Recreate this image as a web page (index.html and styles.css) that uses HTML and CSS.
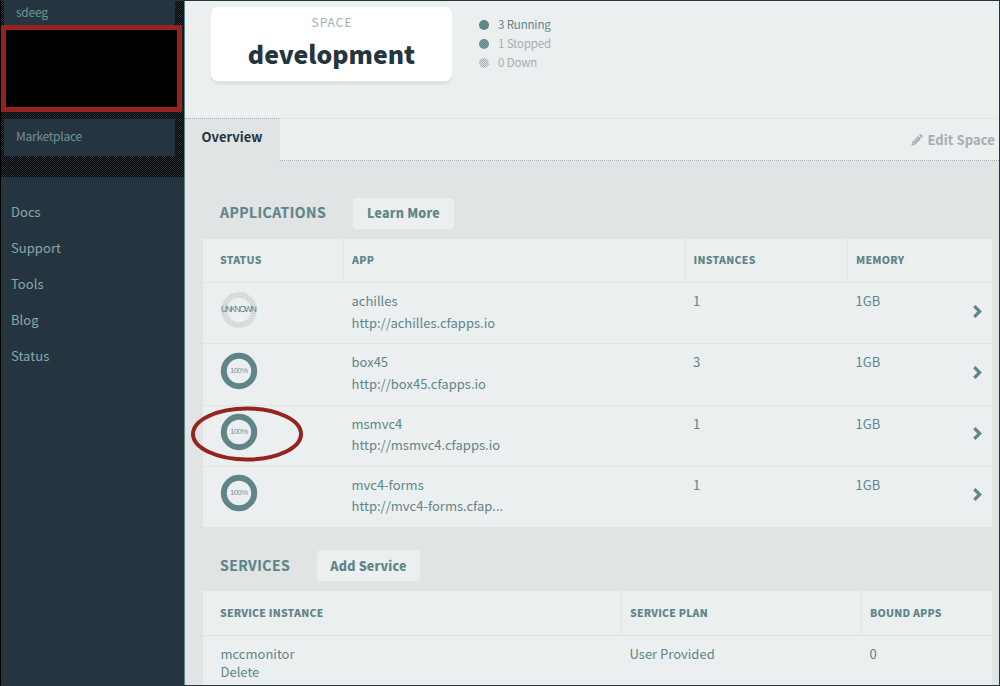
FILE: index.html
```html
<!DOCTYPE html>
<html lang="en">
<head>
<meta charset="utf-8">
<title>development</title>
<link rel="stylesheet" href="styles.css">
</head>
<body>
<div class="app">
  <aside class="sidebar">
    <div class="account">
      <div class="account-item account-user"><span class="t-user">sdeeg</span></div>
      <div class="redacted"></div>
      <div class="account-item account-market"><span class="t-market">Marketplace</span></div>
    </div>
    <nav class="links">
      <a>Docs</a><a>Support</a><a>Tools</a><a>Blog</a><a>Status</a>
    </nav>
  </aside>
  <main class="main">
    <header class="header">
      <div class="space-card">
        <div class="space-label"><span>SPACE</span></div>
        <div class="space-name"><span>development</span></div>
      </div>
      <ul class="states">
        <li class="running"><i class="dot"></i><span>3 Running</span></li>
        <li class="stopped"><i class="dot"></i><span>1 Stopped</span></li>
        <li class="down"><i class="dot"></i><span>0 Down</span></li>
      </ul>
    </header>
    <div class="tabs">
      <div class="tab"><span>Overview</span></div>
      <div class="tab-rest">
        <svg class="pencil" viewBox="0 0 12 12"><path d="M0.3 11.7L1.2 8L7.2 2L10 4.8L4 10.8ZM8 1.3L9 .4Q9.6 0 10.2 .5L11.5 1.8Q12 2.4 11.5 3L10.7 3.9Z"/><path class="cut" d="M3.2 8.2L7.2 4.2M1.7 8.8L3.2 10.3"/></svg>
        <span class="edit">Edit Space</span>
      </div>
    </div>
    <section class="section">
      <div class="title apps-title"><h2><span>APPLICATIONS</span></h2><button class="learn"><span>Learn More</span></button></div>
      <div class="table apps">
        <div class="head"><b><span>STATUS</span></b><b><span>APP</span></b><b><span>INSTANCES</span></b><b><span>MEMORY</span></b></div>
        <div class="row">
          <div class="status"><svg class="ring" viewBox="0 0 38 38"><circle class="unknown" cx="19" cy="19" r="15"/><circle class="specks" cx="19" cy="19" r="16.2"/><circle class="specks" cx="19" cy="19" r="13.8"/><text class="unk" x="19" y="21" textLength="36">UNKNOWN</text></svg></div>
          <div class="name"><span>achilles</span><br><span>http://achilles.cfapps.io</span></div><div>1</div><div>1GB</div><svg class="chev" viewBox="0 0 10 14"><path d="M2 2L7 7L2 12"/></svg>
        </div>
        <div class="row">
          <div class="status"><svg class="ring" viewBox="0 0 38 38"><circle cx="19" cy="19" r="15.2"/><text x="19" y="21" textLength="18">100%</text></svg></div>
          <div class="name"><span>box45</span><br><span>http://box45.cfapps.io</span></div><div>3</div><div>1GB</div><svg class="chev" viewBox="0 0 10 14"><path d="M2 2L7 7L2 12"/></svg>
        </div>
        <div class="row">
          <div class="status"><svg class="ring" viewBox="0 0 38 38"><circle cx="19" cy="19" r="15.2"/><text x="19" y="21" textLength="18">100%</text></svg><svg class="mark" viewBox="0 0 112 56"><ellipse cx="56" cy="28" rx="54" ry="25.5"/></svg></div>
          <div class="name"><span>msmvc4</span><br><span>http://msmvc4.cfapps.io</span></div><div>1</div><div>1GB</div><svg class="chev" viewBox="0 0 10 14"><path d="M2 2L7 7L2 12"/></svg>
        </div>
        <div class="row">
          <div class="status"><svg class="ring" viewBox="0 0 38 38"><circle cx="19" cy="19" r="15.2"/><text x="19" y="21" textLength="18">100%</text></svg></div>
          <div class="name"><span>mvc4-forms</span><br><span>http://mvc4-forms.cfap...</span></div><div>1</div><div>1GB</div><svg class="chev" viewBox="0 0 10 14"><path d="M2 2L7 7L2 12"/></svg>
        </div>
      </div>
      <div class="title services-title"><h2><span>SERVICES</span></h2><button class="add"><span>Add Service</span></button></div>
      <div class="table services">
        <div class="head"><b><span>SERVICE INSTANCE</span></b><b><span>SERVICE PLAN</span></b><b><span>BOUND APPS</span></b></div>
        <div class="row"><div class="first"><span>mccmonitor</span><br><span>Delete</span></div><div><span>User Provided</span></div><div>0</div></div>
      </div>
    </section>
  </main>
</div>
</body>
</html>
```
FILE: styles.css
```css
* { box-sizing: border-box; }
body {
  margin: 0;
  font-family: "Noto Sans CJK SC", "Open Sans", sans-serif;
  font-size: 13px;
  color: #5f8589;
}
.app {
  display: flex;
  width: 1000px;
  height: 686px;
  overflow: hidden;
  border: 1px solid #24353f;
  border-left-color: #000;
}
.sidebar {
  width: 184px;
  flex: none;
  background: #24353f;
  border-right: 1px solid #5f8589;
}
.account {
  height: 176px;
  padding-left: 3px;
  background: repeating-conic-gradient(#000 0 25%, #22323b 0 50%) 0 0 / 2px 2px;
}
.account-item {
  width: 171px;
  padding-left: 12px;
  background: #24353f;
  color: #6f9497;
  font-size: 12px;
  letter-spacing: -.25px;
}
.account-user { height: 24px; line-height: 21px; }
.account-market { height: 37px; line-height: 33px; margin-top: 7px; }
.redacted {
  width: 181px;
  height: 87px;
  margin-left: -3px;
  background: #000;
  border: 5px solid #96231e;
}
.links { display: flex; flex-direction: column; padding: 17px 10px; }
.links a { height: 36px; line-height: 36px; letter-spacing: .05px; color: #8aa8ab; }
.main { flex: 1; min-width: 0; background: #e0e4e5; }
.header { display: flex; height: 117px; padding: 6px 26px; background: #ebeff0; }
.space-card {
  width: 241px;
  height: 74px;
  border-radius: 7px;
  background: #fff;
  box-shadow: 0 4px 0 #dfe3e4;
  text-align: center;
}
.space-label { height: 31px; line-height: 30px; font-size: 12px; letter-spacing: 1px; padding-left: 1px; color: #a2aeb1; }
.space-name { line-height: 31px; font-size: 24.8px; font-weight: 900; color: #24353f; }
.states { margin: 8px 0 0 27px; padding: 0; list-style: none; font-size: 11.5px; letter-spacing: -.15px; }
.states li { display: flex; align-items: center; height: 19px; line-height: 19px; color: #a2aeb1; }
.states .running { color: #5f8589; }
.dot { width: 10px; height: 10px; margin-right: 9px; border-radius: 50%; background: #5f8589; }
.stopped .dot { background: repeating-conic-gradient(#5f8589 0 25%, #7f9fa2 0 50%) 0 0 / 2px 2px; }
.down .dot { background: repeating-conic-gradient(#a2aeb1 0 25%, #dfe3e4 0 50%) 0 0 / 2px 2px; }
.tabs { display: flex; height: 43px; }
.tab { width: 94px; padding-left: 16.5px; border-top: 1px dotted #a2aeb1; line-height: 36px; font-weight: 700; color: #24353f; }
.tab-rest {
  flex: 1;
  display: flex;
  align-items: center;
  justify-content: flex-end;
  padding-right: 4px;
  background: #ebeff0;
  border-top: 1px solid #e0e4e5;
  border-left: 1px solid #e0e4e5;
  border-bottom: 1px dotted #a2aeb1;
  font-weight: 700;
  color: #a2aeb1;
}
.pencil { width: 12px; height: 12px; margin-right: 4px; fill: #a2aeb1; }
.pencil .cut { stroke: #ebeff0; stroke-width: .8; fill: none; }
.edit { line-height: 20px; letter-spacing: .1px; }
.section { padding: 0 6px 0 18px; }
.title { display: flex; align-items: center; padding-left: 17px; }
.apps-title { height: 78px; padding-top: 26px; }
h2 { margin: 0; padding-bottom: 2px; font-size: 14px; line-height: 20px; font-weight: 700; letter-spacing: .45px; -webkit-text-stroke: .2px; }
button {
  height: 31px;
  padding: 0;
  border: 0;
  border-radius: 4px;
  background: #ebeff0;
  color: #5f8589;
  font: 900 12.5px/29px "Noto Sans CJK SC", "Open Sans", sans-serif;
  letter-spacing: .2px;
}
.learn { padding-bottom: 2px; }
.apps-title h2 { width: 133px; }
.learn { width: 101px; }
.services-title { height: 64px; padding-top: 13px; }
.services-title h2 { width: 97px; }
.add { width: 103px; padding-bottom: 1px; }
.table { width: 789px; background: #ebeff0; }
.head, .row { display: grid; }
.apps { height: 288px; }
.apps .head, .apps .row { grid-template-columns: 140px 341.5px 162.5px 1fr; }
.services .head, .services .row { grid-template-columns: 418px 240px 1fr; }
.head { height: 44px; border-bottom: 1px solid #dfe3e4; }
.services .head { height: 45px; }
.head b { padding-left: 8px; border-left: 1px solid #dfe3e4; font-weight: 900; font-size: 10.5px; line-height: 41px; letter-spacing: .27px; }
.head b:first-child { padding-left: 17px; border-left: 0; }
.services .head b { line-height: 44px; letter-spacing: .22px; }
.row { position: relative; height: 61.3px; border-bottom: 1px solid #dfe3e4; line-height: 21.5px; }
.row > div { padding: 7px 0 0 8.5px; }
.row > .status { position: relative; padding: 7.5px 0 0 17px; }
.row:last-child { border-bottom: 0; }
.services .row { height: 60px; line-height: 18px; }
.services .row > div { padding-top: 9px; }
.services .row > .first { padding-left: 17.5px; }
.ring { display: block; width: 38px; height: 38px; fill: none; }
.ring circle { stroke: #5f8589; stroke-width: 6; }
.ring .unknown { stroke: #dfe3e4; stroke-width: 6.5; }
.ring .specks { stroke: #a2aeb1; stroke-width: 1; stroke-dasharray: 1 1.8; }
.ring text { font: 8px "Liberation Sans", sans-serif; text-anchor: middle; fill: #7c999c; }
.ring .unk { font-size: 8.5px; fill: #5f8589; }
.mark { position: absolute; z-index: 1; left: -12.5px; top: 0; width: 112px; height: 56px; fill: none; stroke: #96231e; stroke-width: 4; }
.chev { position: absolute; right: 9px; top: 20.5px; width: 11px; height: 15px; fill: none; stroke: #5f8589; stroke-width: 3; }
```
